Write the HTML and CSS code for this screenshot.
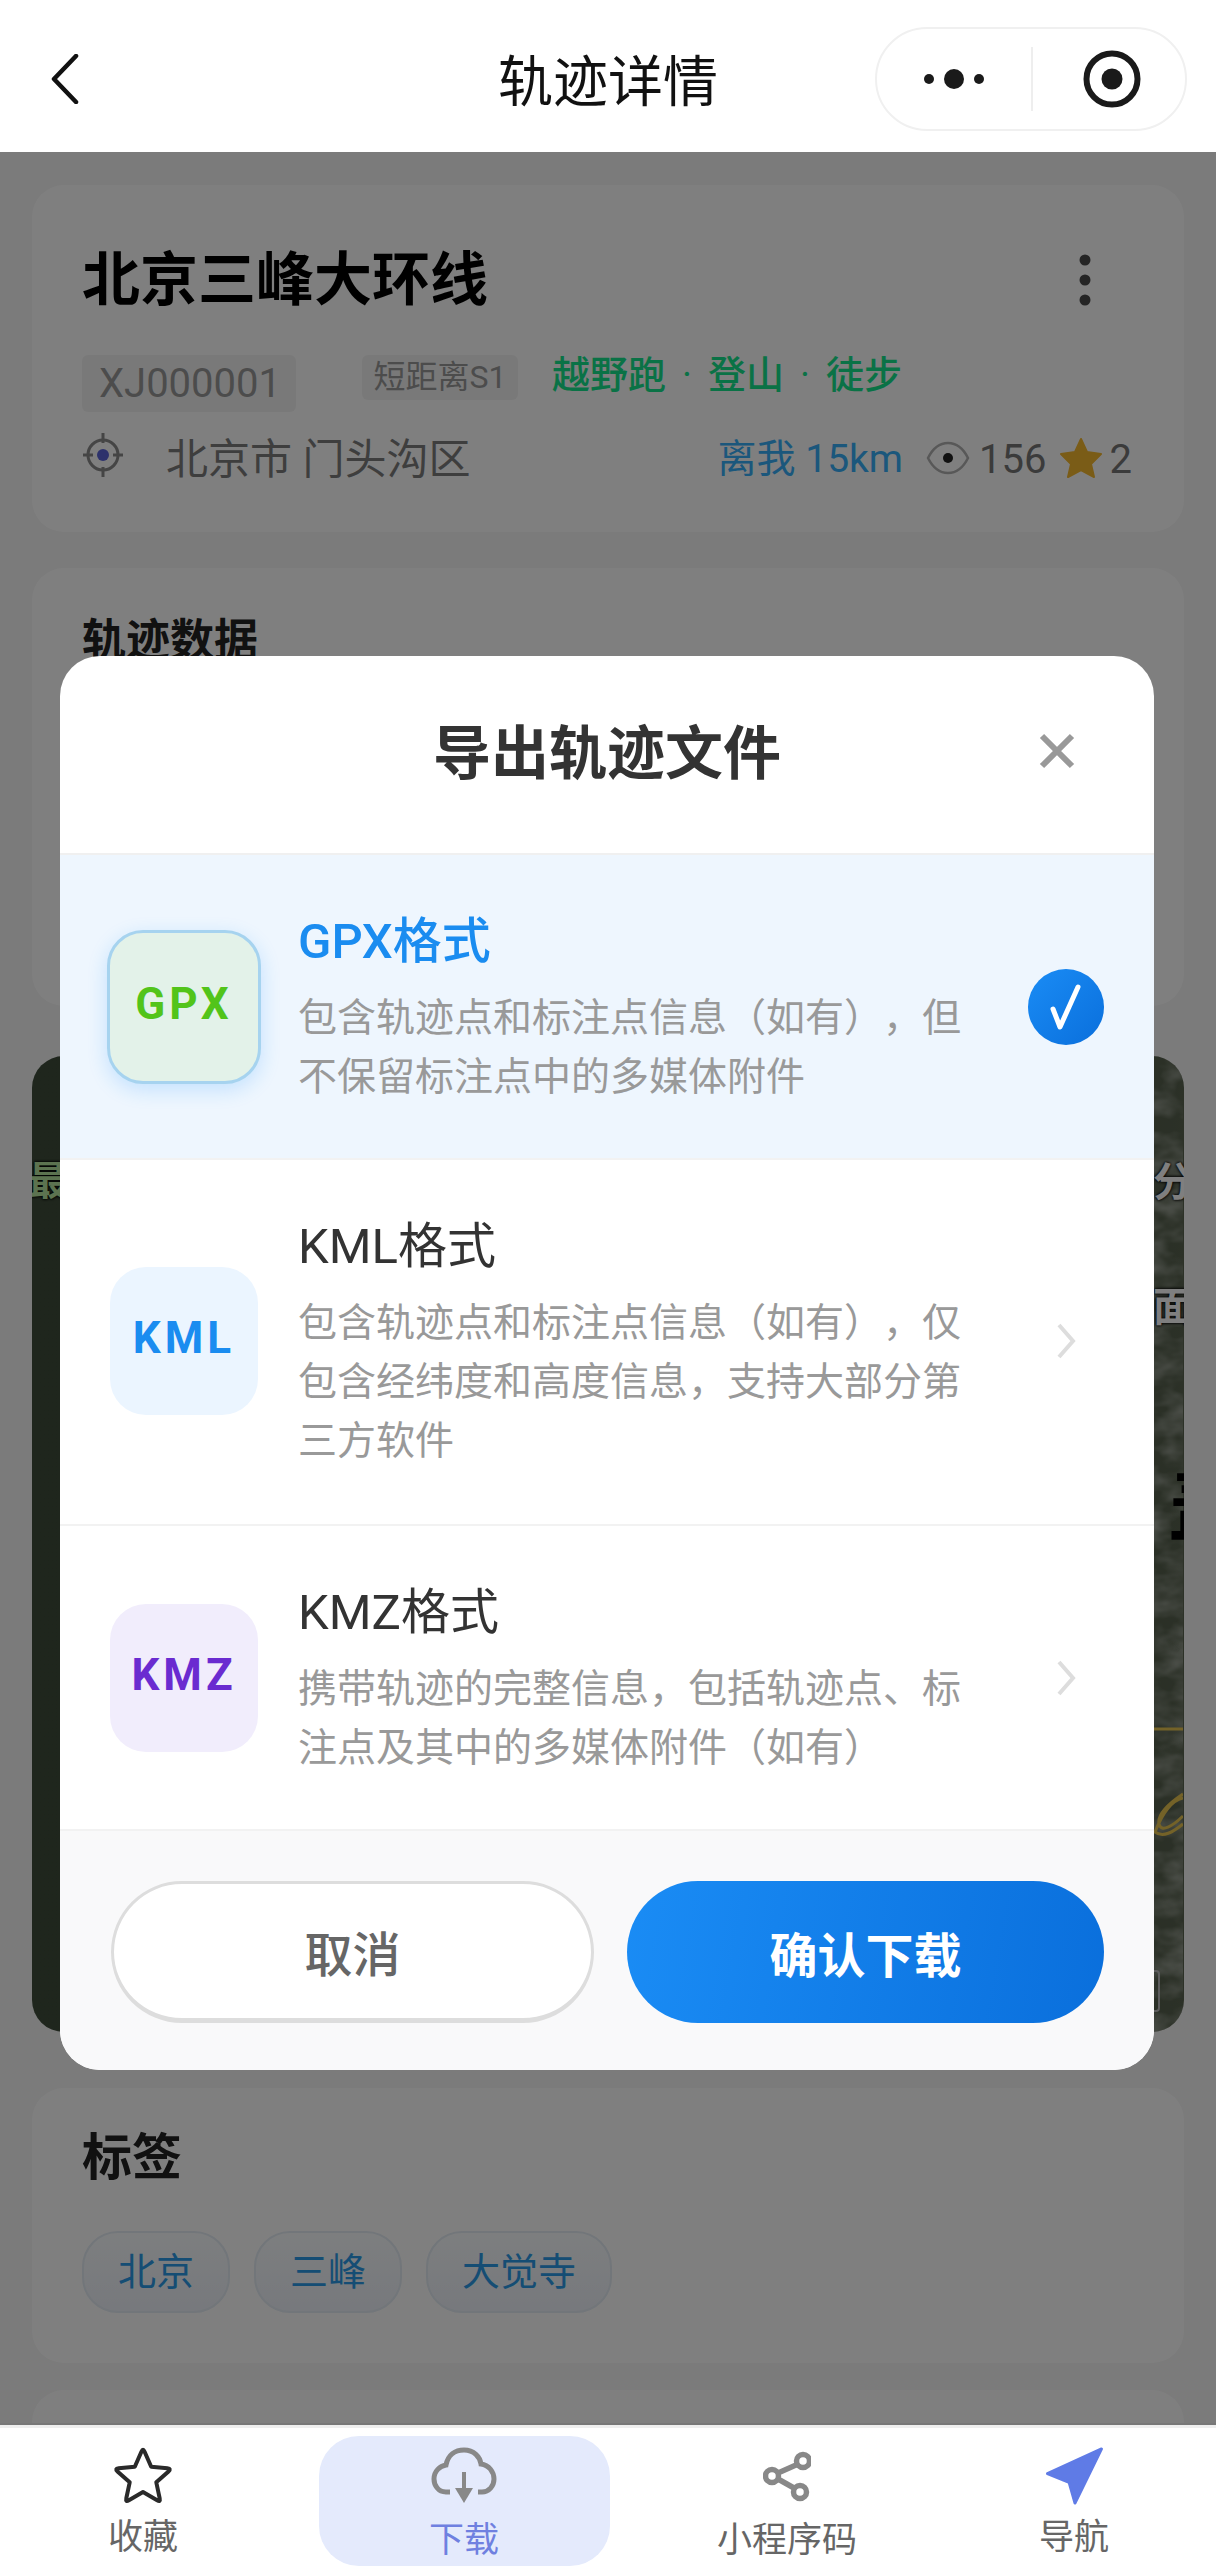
FILE: index.html
```html
<!DOCTYPE html>
<html lang="zh-CN">
<head>
  <meta charset="UTF-8" />
  <meta name="viewport" content="width=device-width, initial-scale=1.0" />
  <title>轨迹详情</title>
  <link rel="stylesheet" href="styles.css">
</head>
<body>
  <div class="page">
    <header class="topbar">
      <svg class="back" width="28" height="50" viewBox="0 0 28 50"><path d="M25 2 3 25l22 23" /></svg>
      <h1>轨迹详情</h1>
      <div class="capsule">
        <svg class="capsule-more" width="66" height="24" viewBox="0 0 66 24">
          <circle cx="9" cy="12" r="5" /><circle cx="34" cy="12" r="10" /><circle cx="59" cy="12" r="5" />
        </svg>
        <span class="capsule-line"></span>
        <svg class="capsule-target" width="58" height="58" viewBox="0 0 58 58">
          <circle class="ring" cx="29" cy="29" r="25.5" /><circle cx="29" cy="29" r="10.5" />
        </svg>
      </div>
    </header>

    <main class="content">
      <section class="card card-info">
        <div class="info-title">
          <h2>北京三峰大环线</h2>
          <svg class="info-more" width="12" height="52" viewBox="0 0 12 52">
            <circle cx="6" cy="6" r="5.5" /><circle cx="6" cy="26" r="5.5" /><circle cx="6" cy="46" r="5.5" />
          </svg>
        </div>
        <div class="info-tags">
          <span class="code">XJ000001</span>
          <span class="level">短距离S1</span>
          <span class="sports">越野跑<span class="sep">·</span>登山<span class="sep">·</span>徒步</span>
        </div>
        <div class="info-meta">
          <svg class="locate" width="42" height="46" viewBox="0 0 42 46">
            <circle class="locate-ring" cx="21" cy="23" r="15" />
            <path class="locate-ring" d="M21 1v10M21 35v10M1 23h10M31 23h10" />
            <circle class="locate-dot" cx="21" cy="23" r="6" />
          </svg>
          <span class="place">北京市 门头沟区</span>
          <div class="stats">
            <span class="distance">离我 15km</span>
            <svg class="eye" width="44" height="34" viewBox="0 0 44 34">
              <path d="M2 17C7 7 14 2 22 2s15 5 20 15c-5 10-12 15-20 15S7 27 2 17Z" />
              <circle cx="22" cy="17" r="5" />
            </svg>
            <span class="stat-num">156</span>
            <svg class="star-gold" width="44" height="42" viewBox="0 0 44 42">
              <path d="m22 2 6 13 14 2-10 10 3 13-13-7-13 7 3-13L2 17l14-2Z" />
            </svg>
            <span class="stat-num">2</span>
          </div>
        </div>
      </section>

      <section class="card card-data">
        <h3>轨迹数据</h3>
      </section>

      <section class="map">
        <svg class="map-texture" width="1151" height="976" viewBox="0 0 1151 976">
          <defs>
            <filter id="mottle">
              <feTurbulence type="fractalNoise" baseFrequency="0.03 0.05" numOctaves="3" seed="4" />
              <feColorMatrix values="0 0 0 0 0.62  0 0 0 0 0.64  0 0 0 0 0.6  1.1 0 0 0 -0.4" />
            </filter>
          </defs>
          <rect class="map-noise" x="900" width="251" height="976" filter="url(#mottle)" />
          <path class="map-trail" d="M1122 673h29M1151 738c-12 8-26 20-24 30 2 9 14 2 24-8M1151 742c-10 2-20 14-28 34 8 6 18 0 28-8" />
        </svg>
        <span class="map-label map-label-a">最</span>
        <span class="map-label map-label-b">分布</span>
        <span class="map-label map-label-c">面地</span>
        <span class="map-label map-label-d">盖</span>
        <span class="map-scale"></span>
      </section>

      <section class="card card-tags">
        <h3>标签</h3>
        <div class="chips">
          <span class="chip">北京</span>
          <span class="chip">三峰</span>
          <span class="chip">大觉寺</span>
        </div>
      </section>

      <section class="card card-next"></section>
    </main>

    <nav class="tabbar">
      <div class="tab">
        <svg class="tab-icon" width="62" height="58" viewBox="0 0 62 58"><path class="icon-star" d="M29.4 4.7Q31 1 32.6 4.7L39.2 19.7 55.4 21.3Q59.5 21.7 56.5 24.4L44.3 35.3 47.7 51.3Q48.6 55.3 45.1 53.2L31 45 16.9 53.2Q13.4 55.3 14.3 51.3L17.7 35.3 5.5 24.4Q2.5 21.7 6.6 21.3L22.8 19.7Z" /></svg>
        <span>收藏</span>
      </div>
      <div class="tab tab-active">
        <div class="tab-pad">
          <svg class="tab-icon" width="66" height="58" viewBox="0 0 66 58">
            <path class="icon-cloud" d="M19 45h-4C7 45 3 38 3 32c0-8 6-13 12-14C17 8 24 3 33 3c10 0 16 7 17 14 8 1 13 8 13 15 0 7-5 13-12 13h-4" />
            <path class="icon-arrow" d="M33 25v20" />
            <path class="icon-head" d="M24 41h18l-9 15Z" />
          </svg>
          <span>下载</span>
        </div>
      </div>
      <div class="tab tab-code">
        <svg class="tab-icon" width="48" height="48" viewBox="0 0 48 48">
          <g class="icon-share">
            <path d="m33 13-18 8M15 27l16 9" />
            <circle cx="40" cy="9" r="6.5" /><circle cx="9" cy="24" r="6.5" /><circle cx="37" cy="40" r="6.5" />
          </g>
        </svg>
        <span>小程序码</span>
      </div>
      <div class="tab">
        <svg class="tab-icon" width="60" height="59" viewBox="0 0 60 59"><path class="icon-nav" d="M58 2 3 27l22 9 6 21Z" /></svg>
        <span>导航</span>
      </div>
    </nav>

    <div class="overlay">
      <div class="modal">
        <div class="modal-head">
          <h2>导出轨迹文件</h2>
          <svg class="modal-close" width="36" height="36" viewBox="0 0 36 36"><path d="M3 3l30 30M33 3 3 33" /></svg>
        </div>

        <div class="row row-active">
          <div class="badge badge-gpx">GPX</div>
          <div class="row-text">
            <div class="row-name">GPX格式</div>
            <p class="row-desc">包含轨迹点和标注点信息（如有），但不保留标注点中的多媒体附件</p>
          </div>
          <div class="row-mark">
            <span class="check">
              <svg width="36" height="46" viewBox="0 0 36 46"><path d="M5 25l7 18L30 3" /></svg>
            </span>
          </div>
        </div>

        <div class="row row-long">
          <div class="badge badge-kml">KML</div>
          <div class="row-text">
            <div class="row-name">KML格式</div>
            <p class="row-desc">包含轨迹点和标注点信息（如有），仅包含经纬度和高度信息，支持大部分第三方软件</p>
          </div>
          <div class="row-mark">
            <svg class="chevron" width="20" height="36" viewBox="0 0 20 36"><path d="M3 2l14 16L3 34" /></svg>
          </div>
        </div>

        <div class="row">
          <div class="badge badge-kmz">KMZ</div>
          <div class="row-text">
            <div class="row-name">KMZ格式</div>
            <p class="row-desc">携带轨迹的完整信息，包括轨迹点、标注点及其中的多媒体附件（如有）</p>
          </div>
          <div class="row-mark">
            <svg class="chevron" width="20" height="36" viewBox="0 0 20 36"><path d="M3 2l14 16L3 34" /></svg>
          </div>
        </div>

        <div class="modal-foot">
          <button class="btn btn-cancel" type="button">取消</button>
          <button class="btn btn-ok" type="button">确认下载</button>
        </div>
      </div>
    </div>
  </div>
</body>
</html>
```

FILE: styles.css
```css
* {
  box-sizing: border-box;
}

body {
  margin: 0;
  font-family: Roboto, "Noto Sans CJK SC", sans-serif;
  background: #f6f6f6;
  color: #000;
  text-spacing-trim: space-all;
}

h1, h2, h3, p {
  margin: 0;
}

.page {
  position: relative;
  display: flex;
  flex-direction: column;
  height: 2575px;
  overflow: hidden;
}

/* top bar */
.topbar {
  position: relative;
  flex: none;
  height: 152px;
  background: #fff;
  display: flex;
  align-items: center;
  justify-content: center;
}

.topbar h1 {
  margin-top: 12px;
  font-size: 55px;
  font-weight: 400;
  line-height: 1;
  color: #111;
}

.back {
  position: absolute;
  left: 51px;
  top: 54px;
}

.back path {
  fill: none;
  stroke: #111;
  stroke-width: 4.5;
  stroke-linecap: round;
  stroke-linejoin: round;
}

.capsule {
  position: absolute;
  left: 875px;
  top: 27px;
  width: 312px;
  height: 104px;
  border: 2px solid #f0f0f0;
  border-radius: 52px;
  display: flex;
  align-items: center;
}

.capsule svg {
  fill: #1a1a1a;
}

.capsule-more {
  margin-left: 43px;
}

.capsule-line {
  width: 2px;
  height: 64px;
  margin-left: 45px;
  background: #eee;
}

.capsule-target {
  margin-left: 50px;
}

.capsule-target .ring {
  fill: none;
  stroke: #1a1a1a;
  stroke-width: 6;
}

/* page behind the dialog */
.content {
  flex: 1;
  min-height: 0;
  overflow: hidden;
  padding: 33px 32px 0;
}

.card {
  background: #fff;
  border-radius: 32px;
  padding: 0 52px 0 50px;
}

.card-info {
  height: 347px;
  padding-top: 60px;
  margin-bottom: 36px;
}

.info-title {
  display: flex;
  align-items: center;
  justify-content: space-between;
  height: 70px;
  padding-right: 41px;
}

.info-title h2 {
  font-size: 58px;
  font-weight: 700;
  line-height: 70px;
}

.info-more {
  fill: #4a4a4a;
}

.info-tags {
  display: flex;
  align-items: flex-start;
  margin-top: 40px;
}

.code {
  width: 214px;
  height: 57px;
  margin-right: 66px;
  padding-left: 2px;
  background: #f3f3f3;
  border-radius: 6px;
  color: #999;
  font-size: 40px;
  line-height: 57px;
  text-align: center;
}

.level {
  width: 156px;
  height: 45px;
  margin-right: 34px;
  background: #f3f3f3;
  border-radius: 6px;
  color: #999;
  font-size: 32px;
  line-height: 45px;
  text-align: center;
}

.sports {
  font-size: 38px;
  font-weight: 500;
  line-height: 40px;
  color: #14e58c;
}

.sep {
  margin: 0 16px;
  font-weight: 400;
}

.info-meta {
  display: flex;
  align-items: center;
  height: 56px;
  margin-top: 15px;
}

.locate {
  flex: none;
}

.locate-ring {
  fill: none;
  stroke: #8a8a8a;
  stroke-width: 3;
}

.locate-dot {
  fill: #5a64d8;
}

.place {
  margin-left: 42px;
  font-size: 42px;
  color: #7c7c7c;
}

.stats {
  margin: 6px 0 0 auto;
  display: flex;
  align-items: center;
}

.distance {
  margin: 0 23px 6px 0;
  font-size: 39px;
  color: #36aef8;
}

.eye {
  margin-right: 9px;
}

.eye path {
  fill: none;
  stroke: #b0b0b0;
  stroke-width: 2.5;
}

.eye circle {
  fill: #222;
}

.stat-num {
  padding-top: 3px;
  font-size: 40px;
  color: #777;
}

.star-gold {
  margin: 0 7px 0 12px;
}

.star-gold path {
  fill: #f5b82e;
  stroke: #f5b82e;
  stroke-width: 2;
  stroke-linejoin: round;
}

.card-data {
  height: 438px;
  padding-top: 48px;
  margin-bottom: 50px;
}

.card h3 {
  font-size: 44px;
  font-weight: 700;
  line-height: 50px;
  color: #222;
}

.map {
  position: relative;
  height: 976px;
  margin-bottom: 56px;
  overflow: hidden;
  border-radius: 32px;
  background: linear-gradient(to right, #3e4c3a 0%, #3c4a38 70%, #58624f 100%);
}

.map-texture {
  position: absolute;
  left: 0;
  top: 0;
}

.map-trail {
  fill: none;
  stroke: #e8c550;
  stroke-width: 3;
}

.map-label {
  position: absolute;
  font-size: 40px;
  font-weight: 700;
  line-height: 1;
  color: #fff;
  text-shadow: 0 0 3px #000, 0 0 3px #000;
  white-space: nowrap;
}

.map-label-a {
  left: -4px;
  top: 106px;
  color: #b8e6a0;
}

.map-label-b {
  left: 1121px;
  top: 107px;
}

.map-label-c {
  left: 1121px;
  top: 232px;
}

.map-label-d {
  left: 1136px;
  top: 408px;
  font-size: 84px;
  color: #000;
  text-shadow: none;
}

.map-scale {
  position: absolute;
  left: 1116px;
  top: 914px;
  width: 12px;
  height: 42px;
  border: 2px solid #bbb;
  border-radius: 4px;
}

.card-tags {
  height: 275px;
  padding-top: 45px;
  margin-bottom: 27px;
}

.card-tags h3 {
  font-size: 50px;
  line-height: 50px;
}

.chips {
  display: flex;
  gap: 24px;
  margin-top: 48px;
}

.chip {
  height: 82px;
  padding: 0 34px;
  border: 2px solid #e4ecf4;
  border-radius: 36px;
  background: linear-gradient(to bottom, #fafdff, #eef2fa);
  color: #2a9ae8;
  font-size: 38px;
  line-height: 78px;
}

.card-next {
  height: 200px;
}

/* bottom tabs */
.tabbar {
  flex: none;
  height: 152px;
  background: #fff;
  border-top: 5px solid #eee;
  display: grid;
  grid-template-columns: 286px 356px 290px 284px;
}

.tab {
  display: flex;
  flex-direction: column;
  align-items: center;
  color: #666;
  font-size: 35px;
  line-height: 40px;
  padding-top: 19px;
}

.tab-icon {
  flex: none;
  height: 58px;
  margin-bottom: 13px;
}

.tab-code .tab-icon {
  margin-bottom: 16px;
}

.tab-active {
  padding-top: 8px;
}

.tab-pad {
  width: 291px;
  height: 130px;
  padding-top: 11px;
  background: #e4eafc;
  border-radius: 40px;
  color: #6f80e0;
  text-align: center;
}

.tab-pad .tab-icon {
  display: block;
  margin: 0 auto 16px;
}

.icon-star {
  fill: none;
  stroke: #2a2a2a;
  stroke-width: 4;
  stroke-linejoin: round;
}

.icon-cloud {
  fill: none;
  stroke: #888;
  stroke-width: 5;
}

.icon-arrow {
  fill: none;
  stroke: #888;
  stroke-width: 4;
}

.icon-head {
  fill: #888;
}

.icon-share {
  fill: none;
  stroke: #888;
  stroke-width: 5.5;
}

.icon-nav {
  fill: #5f7be6;
  stroke: #5f7be6;
  stroke-width: 3;
  stroke-linejoin: round;
}

/* dialog */
.overlay {
  position: absolute;
  left: 0;
  right: 0;
  top: 152px;
  bottom: 150px;
  background: rgba(0, 0, 0, 0.5);
  display: flex;
  justify-content: center;
  align-items: flex-start;
  padding-top: 504px;
}

.modal {
  width: 1094px;
  margin-left: -2px;
  background: #fff;
  border-radius: 40px;
  overflow: hidden;
}

.modal-head {
  position: relative;
  height: 199px;
  padding-bottom: 2px;
  display: flex;
  align-items: center;
  justify-content: center;
  border-bottom: 2px solid #f0f0f0;
}

.modal-head h2 {
  font-size: 58px;
  font-weight: 700;
  line-height: 1;
  color: #333;
}

.modal-close {
  position: absolute;
  left: 979px;
  top: 77px;
}

.modal-close path {
  fill: none;
  stroke: #999;
  stroke-width: 6;
}

.row {
  display: flex;
  align-items: center;
  padding: 56px 50px 51px;
  border-bottom: 2px solid #f2f2f2;
}

.row-long {
  padding-bottom: 53px;
}

.row-active {
  background: #eef6fe;
}

.badge {
  flex: none;
  width: 148px;
  height: 148px;
  margin: 0 40px 5px 0;
  border-radius: 36px;
  font-size: 44px;
  font-weight: 700;
  line-height: 142px;
  text-align: center;
  letter-spacing: 4px;
}

.badge-gpx {
  width: 154px;
  height: 154px;
  margin: 0 37px 5px -3px;
  border: 3px solid #a6d3ef;
  background: #e3f2e9;
  color: #52c41a;
  box-shadow: 0 6px 20px rgba(24, 144, 255, 0.2);
}

.badge-kml {
  background: #ebf5ff;
  color: #1a8cf0;
}

.badge-kmz {
  background: #f1edfc;
  color: #6a2bd0;
}

.row-text {
  width: 670px;
}

.row-name {
  font-size: 49px;
  line-height: 62px;
  color: #333;
}

.row-active .row-name {
  font-weight: 500;
  color: #1a8cf0;
}

.row-desc {
  margin-top: 16px;
  font-size: 39px;
  line-height: 59px;
  color: #999;
}

.row-mark {
  margin: 0 0 5px auto;
  width: 76px;
  display: flex;
  justify-content: center;
}

.check {
  width: 76px;
  height: 76px;
  border-radius: 50%;
  background: linear-gradient(135deg, #1a8cf5, #0a6fdc);
  display: flex;
  align-items: center;
  justify-content: center;
}

.check path {
  fill: none;
  stroke: #fff;
  stroke-width: 5;
  stroke-linecap: round;
  stroke-linejoin: round;
}

.chevron path {
  fill: none;
  stroke: #ddd;
  stroke-width: 4;
}

.modal-foot {
  display: flex;
  gap: 33px;
  padding: 50px 50px 47px 51px;
  background: #f9f9fa;
}

.btn {
  flex: 1;
  height: 142px;
  border-radius: 71px;
  font-family: inherit;
  font-size: 48px;
}

.btn-cancel {
  border: 3px solid #ddd;
  border-bottom-width: 5px;
  background: #fff;
  color: #666;
  font-weight: 500;
}

.btn-ok {
  border: none;
  background: linear-gradient(100deg, #1a8cf5, #0a6fdc);
  color: #fff;
  font-weight: 700;
}
```
